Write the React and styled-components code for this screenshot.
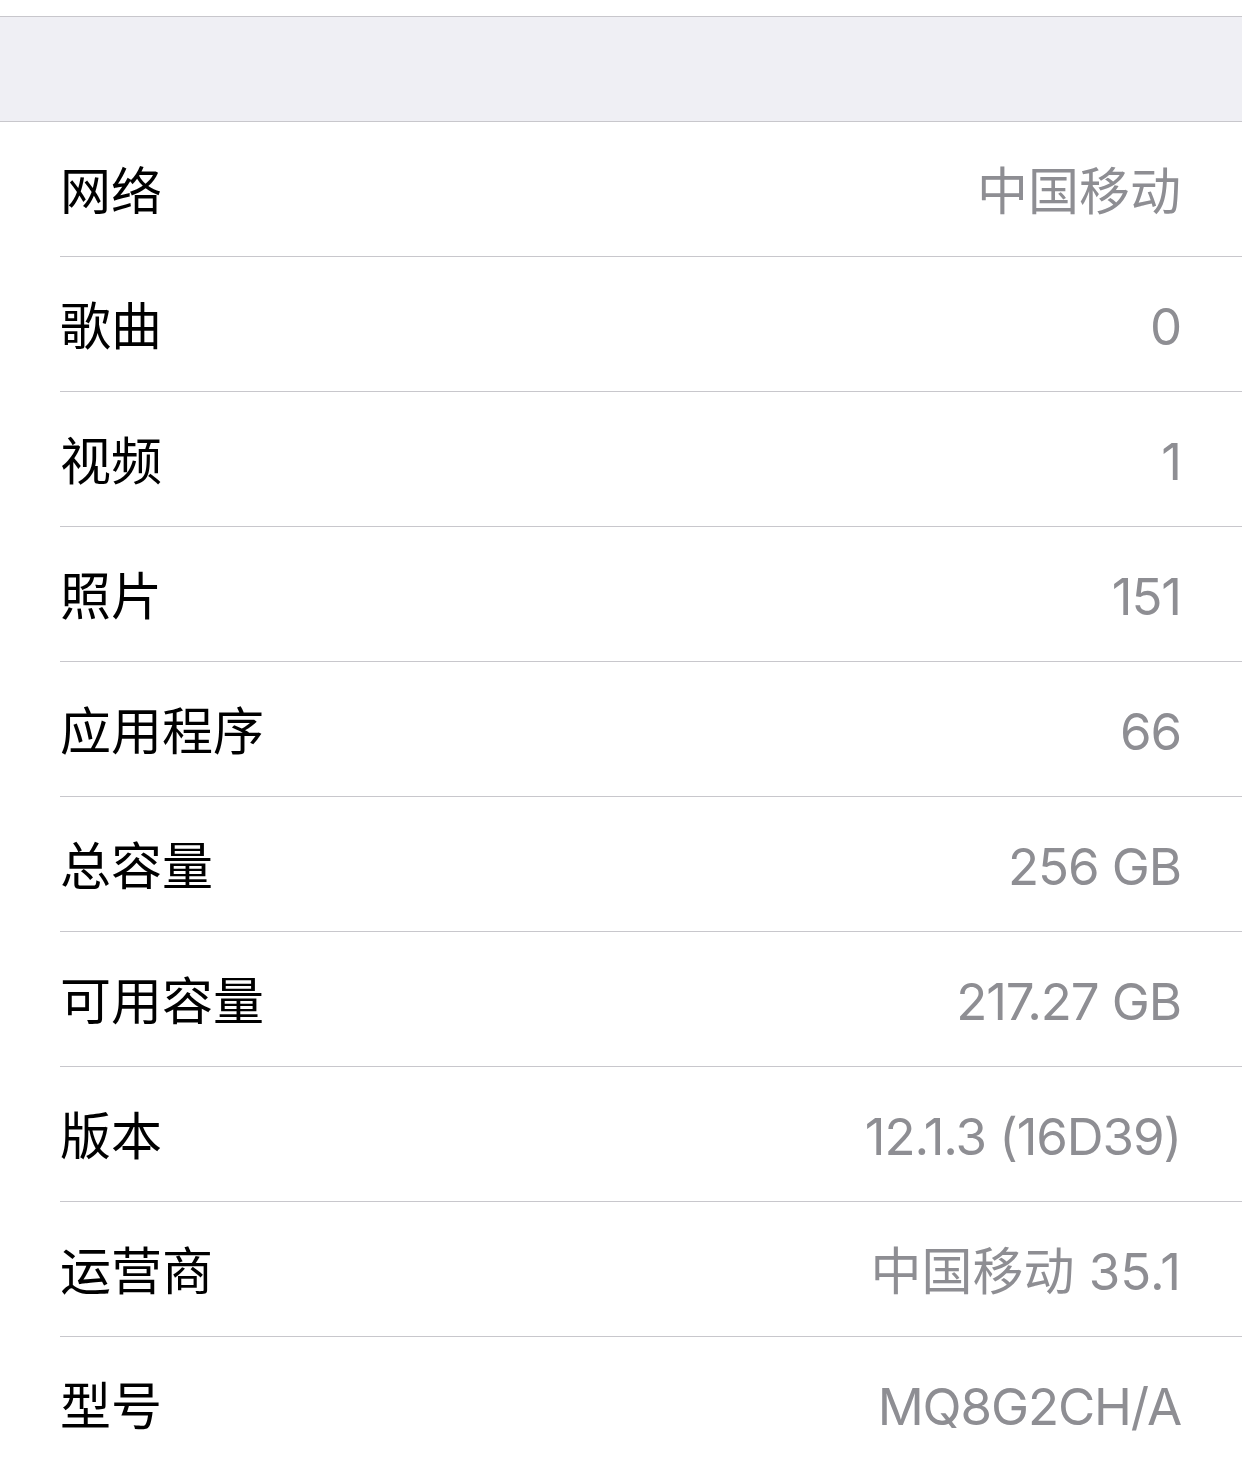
import React from "react"
import styled, { createGlobalStyle } from "styled-components"

const Global = createGlobalStyle`
    body{
        margin: 0;
        background: #ffffff;
        font-family: Inter, "Noto Sans CJK SC", sans-serif;
    }
`

const Page = styled.div`
    width: 1242px;
    height: 1465px;
    overflow: hidden;
    background: #ffffff;
    padding-top: 16px;
    box-sizing: border-box;
`

const Header = styled.div`
    height: 104px;
    background: #efeff4;
    border-top: 1px solid #c8c7cc;
    border-bottom: 1px solid #c8c7cc;
`

const List = styled.div`
    background: #ffffff;
`

const Row = styled.div`
    display: flex;
    align-items: center;
    justify-content: space-between;
    height: 134px;
    margin-left: 60px;
    padding-right: 61px;
    border-bottom: ${p => p.$last ? "none" : "1px solid #c8c7cc"};
    font-size: 51px;
    line-height: 1;
`

const Label = styled.span`
    color: #000000;
    padding-top: 4px;
`

const Value = styled.span`
    color: #8e8e93;
    padding-top: 4px;
    letter-spacing: ${p => p.$latin ? "-1.1px" : "0"};
`

const rows = [
    ["网络", "中国移动"],
    ["歌曲", "0"],
    ["视频", "1"],
    ["照片", "151"],
    ["应用程序", "66"],
    ["总容量", "256 GB"],
    ["可用容量", "217.27 GB"],
    ["版本", "12.1.3 (16D39)"],
    ["运营商", "中国移动 35.1"],
    ["型号", "MQ8G2CH/A"],
]

const App = () =>
    <Page>
        <Global/>
        <Header/>
        <List>
            {rows.map(([label, value], i) =>
                <Row key={label} $last={i === rows.length - 1}>
                    <Label>{label}</Label>
                    <Value $latin={/^[\x00-\x7f]+$/.test(value)}>{value}</Value>
                </Row>
            )}
        </List>
    </Page>

export default App
